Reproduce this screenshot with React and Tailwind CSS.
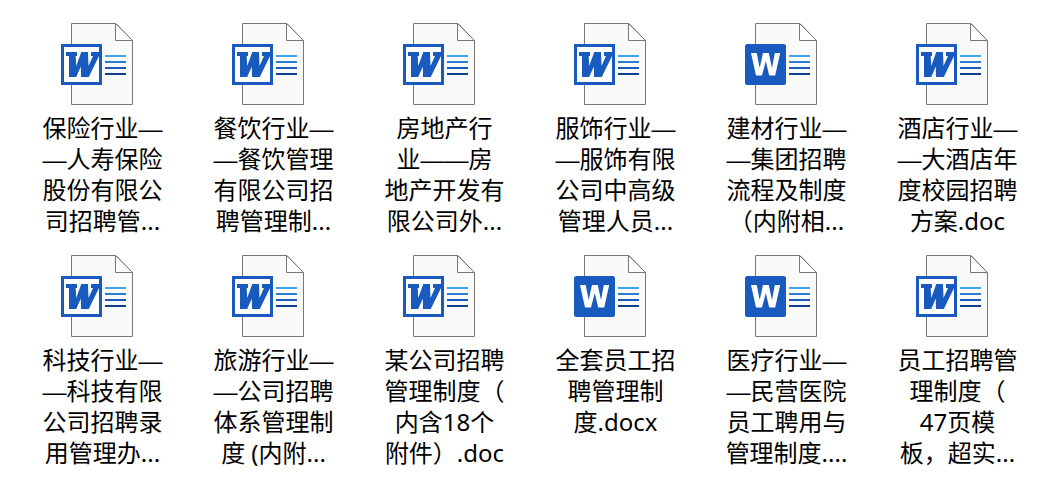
import React from 'react';

const FILES = [
  { style: 'classic', lines: ['保险行业—', '—人寿保险', '股份有限公', '司招聘管...'] },
  { style: 'classic', lines: ['餐饮行业—', '—餐饮管理', '有限公司招', '聘管理制...'] },
  { style: 'classic', lines: ['房地产行', '业——房', '地产开发有', '限公司外...'] },
  { style: 'classic', lines: ['服饰行业—', '—服饰有限', '公司中高级', '管理人员...'] },
  { style: 'modern', lines: ['建材行业—', '—集团招聘', '流程及制度', '（内附相...'] },
  { style: 'classic', lines: ['酒店行业—', '—大酒店年', '度校园招聘', '方案.doc'] },
  { style: 'classic', lines: ['科技行业—', '—科技有限', '公司招聘录', '用管理办...'] },
  { style: 'classic', lines: ['旅游行业—', '—公司招聘', '体系管理制', '度 (内附...'] },
  { style: 'classic', lines: ['某公司招聘', '管理制度（', '内含18个', '附件）.doc'] },
  { style: 'modern', lines: ['全套员工招', '聘管理制', '度.docx'] },
  { style: 'modern', lines: ['医疗行业—', '—民营医院', '员工聘用与', '管理制度....'] },
  { style: 'classic', lines: ['员工招聘管', '理制度（', '47页模', '板，超实...'] },
];

function ClassicBadge() {
  return (
    <>
      <rect x="1.5" y="22.5" width="38" height="38" fill="#fff" stroke="#185abd" strokeWidth="3" />
      <path
        d="M5 29H16V33H14.7L15.2 43L20.3 29H27L27.5 43L32 33H30V29H39V33H38L27.8 54H20L19.8 43.5L15.2 54H8V33H5Z"
        fill="#185abd"
      />
    </>
  );
}

function ModernBadge() {
  return (
    <>
      <rect x="0" y="21" width="41" height="41" rx="2.5" fill="#185abd" />
      <path
        d="M6 30H11.7L14.7 45L18 30H23.8L27 45L29.8 30H35.2L30.2 52.5H24.2L20.8 38L17 52.5H11Z"
        fill="#fff"
      />
    </>
  );
}

function WordIcon({ style }) {
  return (
    <svg aria-hidden="true" className="h-[83px] w-[83px] shrink-0" viewBox="0 0 83 83">
      <path d="M10.5 0.5H55L71.5 17.5V81.5H10.5Z" fill="#fafafa" stroke="#797774" />
      <path d="M54.5 0.5V17.5H71.5Z" fill="#fff" stroke="#797774" />
      <path d="M44 33H65" stroke="#41a5ee" strokeWidth="2" />
      <path d="M44 39H65" stroke="#2b7cd3" strokeWidth="2" />
      <path d="M44 45H65" stroke="#185abd" strokeWidth="2" />
      <path d="M44 51H65" stroke="#103f91" strokeWidth="2" />
      {style === 'classic' ? <ClassicBadge /> : <ModernBadge />}
    </svg>
  );
}

// Dashes take a face whose em dash fills its width, so that they join up.
function NameLine({ text }) {
  return (
    <span className="block">
      {text.split(/(—+)/).map((part, index) =>
        part.startsWith('—') ? (
          <span className="font-['Liberation_Sans',sans-serif] leading-none" key={index}>
            {part}
          </span>
        ) : (
          part
        )
      )}
    </span>
  );
}

function FileItem({ style, lines }) {
  return (
    <li className="flex min-w-0 flex-col items-center gap-1.5">
      <WordIcon style={style} />
      <p className="text-center text-[24px] leading-[31px] whitespace-nowrap text-black">
        {lines.map((line) => (
          <NameLine key={line} text={line} />
        ))}
      </p>
    </li>
  );
}

export default function App() {
  return (
    <main
      className="min-h-screen bg-white pt-[23px] pr-[15px] pb-4 pl-[17px] font-['Noto_Sans','Noto_Sans_CJK_SC',sans-serif]"
      lang="zh-CN"
    >
      <ul className="grid grid-cols-6 gap-y-[19px]">
        {FILES.map((file) => (
          <FileItem key={file.lines.join('')} lines={file.lines} style={file.style} />
        ))}
      </ul>
    </main>
  );
}
